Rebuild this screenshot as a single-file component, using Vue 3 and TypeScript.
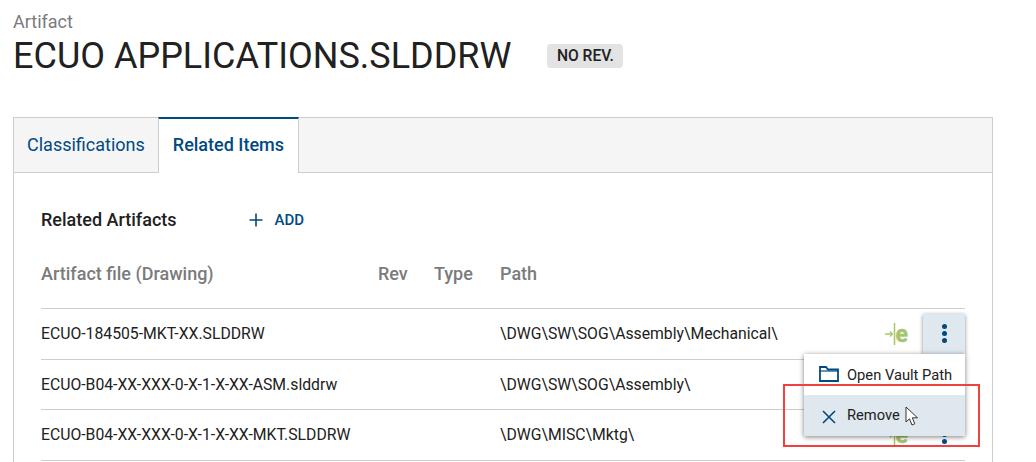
<script setup lang="ts">
interface Artifact {
  file: string
  path: string
}

const artifacts: Artifact[] = [
  { file: 'ECUO-184505-MKT-XX.SLDDRW', path: '\\DWG\\SW\\SOG\\Assembly\\Mechanical\\' },
  { file: 'ECUO-B04-XX-XXX-0-X-1-X-XX-ASM.slddrw', path: '\\DWG\\SW\\SOG\\Assembly\\' },
  { file: 'ECUO-B04-XX-XXX-0-X-1-X-XX-MKT.SLDDRW', path: '\\DWG\\MISC\\Mktg\\' },
]
</script>

<template>
  <div class="page">
    <header class="head">
      <div class="eyebrow">Artifact</div>
      <div class="title-row">
        <h1>ECUO APPLICATIONS.SLDDRW</h1>
        <span class="rev">NO REV.</span>
      </div>
    </header>

    <section class="card">
      <div class="tabs">
        <div class="tab">Classifications</div>
        <div class="tab active">Related Items</div>
      </div>

      <div class="body">
        <div class="section-head">
          <h2>Related Artifacts</h2>
          <button class="add">
            <svg width="14" height="14" viewBox="0 0 14 14">
              <path d="M7 0.5V13.5M0.5 7H13.5" stroke="#004a80" stroke-width="1.6" fill="none" />
            </svg>
            ADD
          </button>
        </div>

        <div class="row head-row">
          <div>Artifact file (Drawing)</div>
          <div>Rev</div>
          <div>Type</div>
          <div>Path</div>
          <div></div>
        </div>

        <div v-for="(a, i) in artifacts" :key="a.file" class="row item">
          <div>{{ a.file }}</div>
          <div></div>
          <div></div>
          <div>{{ a.path }}</div>
          <!-- second row's actions sit fully behind the open menu -->
          <div class="actions" :class="{ covered: i === 1 }">
            <svg v-if="i !== 1" class="link-icon" width="26" height="26" viewBox="0 0 26 26">
              <path d="M2 13H9" stroke="#a5c56f" stroke-width="1.5" fill="none" />
              <path d="M7 10.5L9.500 13L7 15.500" stroke="#a5c56f" stroke-width="1.300" fill="none" />
              <path d="M11.500 2V24" stroke="#a5c56f" stroke-width="1.500" fill="none" />
              <text x="12.500" y="20.500" class="link-e">e</text>
            </svg>
            <div class="kebab-wrap">
              <button class="kebab" :class="{ open: i === 0 }">
                <span></span><span></span><span></span>
              </button>
              <div v-if="i === 0" class="menu">
                <div class="menu-item">
                  <svg width="20" height="16" viewBox="0 0 20 16">
                    <path
                      d="M1 15V1H7L9 3.500H19V15Z"
                      stroke="#004a80"
                      stroke-width="1.800"
                      fill="none"
                    />
                    <path d="M1 5H19" stroke="#004a80" stroke-width="1.200" fill="none" />
                  </svg>
                  <span class="menu-label">Open Vault Path</span>
                </div>
                <div class="menu-item hover">
                  <svg class="x-icon" width="14" height="14" viewBox="0 0 14 14">
                    <path d="M1 1L13 13M13 1L1 13" stroke="#004a80" stroke-width="1.600" fill="none" />
                  </svg>
                  Remove
                  <svg class="cursor" width="15" height="21" viewBox="0 0 15 21">
                    <path
                      d="M1 1V16L4.500 12.800L7 19L9.800 17.800L7.300 11.800H12.500Z"
                      fill="#fff"
                      stroke="#333"
                      stroke-width="1"
                    />
                  </svg>
                </div>
              </div>
            </div>
          </div>
        </div>
      </div>
    </section>

    <div class="callout"></div>
  </div>
</template>

<style>
html,
body {
  margin: 0;
  height: 100%;
  overflow: hidden;
  background: #fff;
}
</style>

<style scoped>
.page {
  position: relative;
  height: 462px;
  overflow: hidden;
  padding: 12px 43px 0 13px;
  font-family: Roboto, "Liberation Sans", sans-serif;
  color: #212121;
  box-sizing: border-box;
}
.eyebrow { font-size: 18px; line-height: 20px; color: #7b7b7b; }
.title-row { display: flex; align-items: center; gap: 36px; }
h1 { margin: 0; font-size: 36px; line-height: 48px; font-weight: 400; }
.rev {
  background: #e3e3e3; border-radius: 4px; padding: 0 9.500px;
  font-size: 15.600px; line-height: 24px; font-weight: 500;
}

.card {
  margin-top: 37px; border: 1px solid #cdcdcd; border-bottom: 0;
  box-sizing: border-box; height: 400px;
}
.tabs { display: flex; height: 54px; background: #f5f5f5; border-bottom: 1px solid #cdcdcd; }
.tab {
  padding: 0 13px; font-size: 18px; line-height: 54px; color: #004a80;
  box-sizing: border-box;
}
.tab.active {
  background: #fff; font-weight: 500; height: 56px; margin-top: -1px; padding: 0 14px;
  border-top: 2px solid #004a80; border-left: 1px solid #cdcdcd; border-right: 1px solid #cdcdcd;
  line-height: 51px;
}

.body { padding: 32px 27px 0 27px; }
.section-head { display: flex; align-items: center; gap: 72px; height: 30px; }
h2 { margin: 0 0 2px; font-size: 18px; font-weight: 500; }
.add {
  display: flex; align-items: center; gap: 12px; border: 0; background: none; padding: 0;
  font: 500 15px Roboto, sans-serif; color: #004a80;
}

.row {
  display: grid; grid-template-columns: 337px 56px 66px 1fr 82px; align-items: center;
}
.head-row {
  height: 65px; padding-bottom: 5px; box-sizing: border-box; margin-top: 9px;
  border-bottom: 1px solid #cdcdcd;
  font-size: 18px; font-weight: 500; color: #7b7b7b;
}
.item {
  height: 50.500px; font-size: 15.750px; border-bottom: 1px solid #cdcdcd; box-sizing: border-box;
}
.actions { display: flex; align-items: center; justify-content: flex-end; gap: 14px; }
.actions.covered { visibility: hidden; }
.link-e { font: 700 23px Roboto, sans-serif; fill: #a5c56f; stroke: #a5c56f; stroke-width: 0.5px; }
.kebab-wrap { position: relative; }
.kebab {
  display: flex; flex-direction: column; align-items: center; justify-content: center; gap: 2px;
  width: 42px; height: 40px; padding: 0; border: 0; background: none;
}
.kebab span { width: 5px; height: 5px; border-radius: 50%; background: #004a80; }
.kebab.open {
  background: #dfe7ef; box-shadow: 0 1px 4px rgba(0, 0, 0, 0.45);
}
.menu {
  position: absolute; top: 40px; right: 0; width: 161px; background: #fff; z-index: 2;
  box-shadow: 0 1px 5px rgba(0, 0, 0, 0.5);
}
.menu-item {
  position: relative; display: flex; align-items: center; gap: 8px; height: 41px;
  padding-left: 15px; font-size: 14.700px; color: #212121;
}
.menu-label { padding-top: 1px; }
.menu-item.hover { background: #dfe7ef; gap: 11px; padding-left: 18px; }
.x-icon { margin-top: 4px; }
.cursor { position: absolute; left: 101px; top: 11px; }

.callout {
  position: absolute; left: 783px; top: 384px; width: 197px; height: 63px;
  border: 2px solid #f04040; box-sizing: border-box; z-index: 3;
}
</style>
